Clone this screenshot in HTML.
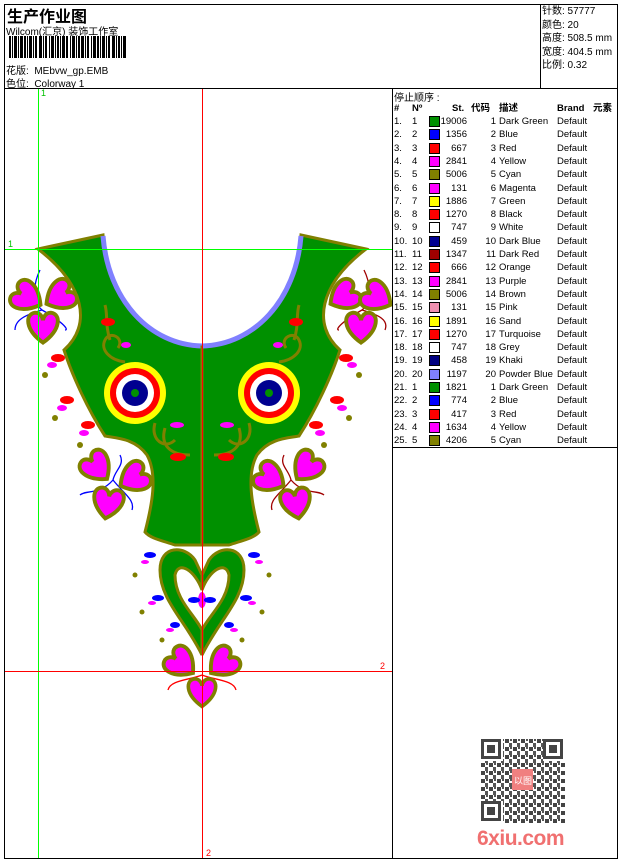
<!DOCTYPE html>
<html><head><meta charset="utf-8"><style>
*{margin:0;padding:0}
body{width:620px;height:860px;background:#fff;position:relative;overflow:hidden;font-family:"Liberation Sans","Noto Sans CJK SC",sans-serif;font-size:10px;color:#000}
.a{position:absolute;white-space:nowrap}
.r{position:absolute;left:393px;height:13px;width:224px;font-size:9.5px;line-height:13px}
.r span{position:absolute}
.sw{width:9px;height:9px;border:1px solid #000;top:1px;left:36px}
</style></head><body>
<div class="a" style="left:4px;top:4px;width:612px;height:853px;border:1px solid #000"></div>
<div class="a" style="left:4px;top:88px;width:613px;height:1px;background:#000"></div>
<div class="a" style="left:540px;top:4px;width:1px;height:84px;background:#000"></div>
<div class="a" style="left:392px;top:88px;width:1px;height:770px;background:#000"></div>
<div class="a" style="left:392px;top:447px;width:225px;height:1px;background:#000"></div>

<div class="a" style="left:7px;top:3px;font-size:16px;font-weight:bold">生产作业图</div>
<div class="a" style="left:6px;top:23px;font-size:10px">Wilcom(汇京) 装饰工作室</div>
<svg class="a" style="left:9px;top:36px" width="118" height="22"><g fill="#000">
<rect x="0" width="2" height="22"/><rect x="3" width="1" height="22"/><rect x="5" width="3" height="22"/><rect x="9" width="1" height="22"/><rect x="11" width="3" height="22"/><rect x="15" width="2" height="22"/><rect x="18" width="1" height="22"/><rect x="20" width="3" height="22"/><rect x="24" width="1" height="22"/><rect x="26" width="2" height="22"/><rect x="30" width="3" height="22"/><rect x="34" width="1" height="22"/><rect x="36" width="2" height="22"/><rect x="40" width="1" height="22"/><rect x="42" width="3" height="22"/><rect x="46" width="1" height="22"/><rect x="48" width="2" height="22"/><rect x="51" width="1" height="22"/><rect x="53" width="3" height="22"/><rect x="57" width="2" height="22"/><rect x="61" width="1" height="22"/><rect x="63" width="3" height="22"/><rect x="67" width="1" height="22"/><rect x="69" width="2" height="22"/><rect x="72" width="3" height="22"/><rect x="76" width="1" height="22"/><rect x="78" width="2" height="22"/><rect x="82" width="1" height="22"/><rect x="84" width="3" height="22"/><rect x="88" width="2" height="22"/><rect x="91" width="1" height="22"/><rect x="93" width="3" height="22"/><rect x="97" width="1" height="22"/><rect x="99" width="2" height="22"/><rect x="103" width="3" height="22"/><rect x="107" width="1" height="22"/><rect x="109" width="2" height="22"/><rect x="112" width="1" height="22"/><rect x="114" width="3" height="22"/></g></svg>
<div class="a" style="left:6px;top:62px">花版:&nbsp; MEbvw_gp.EMB</div>
<div class="a" style="left:6px;top:75px">色位:&nbsp; Colorway 1</div>

<div class="a" style="left:542px;top:5px;line-height:13.5px">针数: 57777<br>颜色: 20<br>高度: 508.5 mm<br>宽度: 404.5 mm<br>比例: 0.32</div>

<div class="a" style="left:394px;top:89px">停止顺序 :</div>
<div class="r" style="top:102px;font-weight:bold;text-decoration:underline"><span style="left:1px">#</span><span style="left:19px">Nº</span><span style="left:59px">St.</span><span style="left:78px">代码</span><span style="left:106px">描述</span><span style="left:164px">Brand</span><span style="left:200px">元素</span></div>
<div id="t"></div>

<svg class="a" style="left:0;top:0" width="392" height="860">
<defs>
<g id="hrt"><path d="M0,12 C-14,2 -14,-10 -6,-11 C-2,-11 0,-7 0,-5 C0,-7 2,-11 6,-11 C14,-10 14,2 0,12Z" fill="#ff00ff" stroke="#808000" stroke-width="3"/></g>
<g id="half">
<path d="M38,249 L103,235 C108,300 150,345 202,347 L202,545 L175,545 C160,540 150,538 145,532 C152,505 158,475 147,455 C135,438 115,438 105,436 C88,410 72,375 64,350 C92,325 85,285 38,249Z" fill="#009000" stroke="#808000" stroke-width="3"/>
<path d="M103,236 C108,300 150,345 202,346" fill="none" stroke="#8080ff" stroke-width="5"/>
<path d="M202,655 C185,620 160,600 160,570 C160,545 185,545 195,560 L202,575 L202,590 C195,570 178,560 175,575 C175,600 195,615 202,630Z" fill="#009000" stroke="#808000" stroke-width="3"/>
<g transform="translate(135,393)">
<circle r="31" fill="#ffff00"/><circle r="25" fill="#ff0000"/><circle r="19" fill="#fff"/><circle r="13" fill="#000090"/><circle r="4" fill="#009000"/></g>
<path d="M125,362 C110,360 100,350 105,340 C110,330 125,338 118,348 M110,340 C105,325 108,315 105,305" fill="none" stroke="#808000" stroke-width="3"/>
<path d="M155,423 C150,440 165,450 175,440 M165,428 C160,445 170,455 190,455" fill="none" stroke="#808000" stroke-width="3"/>
<ellipse cx="108" cy="322" rx="7" ry="4" fill="#ff0000"/><ellipse cx="126" cy="345" rx="5" ry="3" fill="#ff00ff"/>
<ellipse cx="177" cy="425" rx="7" ry="3" fill="#ff00ff"/><ellipse cx="178" cy="457" rx="8" ry="4" fill="#ff0000"/>
<ellipse cx="58" cy="358" rx="7" ry="4" fill="#ff0000"/><ellipse cx="67" cy="400" rx="7" ry="4" fill="#ff0000"/><ellipse cx="88" cy="425" rx="7" ry="4" fill="#ff0000"/>
<ellipse cx="52" cy="365" rx="5" ry="3" fill="#ff00ff"/><ellipse cx="62" cy="408" rx="5" ry="3" fill="#ff00ff"/><ellipse cx="84" cy="433" rx="5" ry="3" fill="#ff00ff"/>
<circle cx="45" cy="375" r="3" fill="#808000"/><circle cx="55" cy="418" r="3" fill="#808000"/><circle cx="80" cy="445" r="3" fill="#808000"/>
<ellipse cx="150" cy="555" rx="6" ry="3" fill="#0000ff"/><ellipse cx="158" cy="598" rx="6" ry="3" fill="#0000ff"/><ellipse cx="175" cy="625" rx="5" ry="3" fill="#0000ff"/>
<ellipse cx="145" cy="562" rx="4" ry="2" fill="#ff00ff"/><ellipse cx="152" cy="603" rx="4" ry="2" fill="#ff00ff"/><ellipse cx="170" cy="630" rx="4" ry="2" fill="#ff00ff"/>
<circle cx="135" cy="575" r="2.5" fill="#808000"/><circle cx="142" cy="612" r="2.5" fill="#808000"/><circle cx="162" cy="640" r="2.5" fill="#808000"/>
</g>
</defs>
<use href="#half"/>
<use href="#half" transform="translate(404,0) scale(-1,1)"/>
<ellipse cx="202" cy="600" rx="4" ry="8" fill="#ff00ff"/><ellipse cx="194" cy="600" rx="6" ry="3" fill="#0000ff"/><ellipse cx="210" cy="600" rx="6" ry="3" fill="#0000ff"/>
<g fill="none" stroke-width="1.3">
<path d="M42,310 C30,300 35,280 40,270 M42,310 C25,315 15,320 15,330 M42,310 C60,320 70,330 65,330" stroke="#0000ff"/>
<path d="M362,310 C374,300 369,280 364,270 M362,310 C379,315 389,320 385,330 M362,310 C344,320 334,330 339,330" stroke="#a00000"/>
<path d="M113,480 C100,495 85,490 80,495 M113,480 C125,495 135,500 132,510 M113,480 C115,470 125,465 120,455" stroke="#0000ff"/>
<path d="M291,480 C304,495 319,490 324,495 M291,480 C279,495 269,500 272,510 M291,480 C289,470 279,465 284,455" stroke="#a00000"/>
<path d="M202,675 C190,680 170,680 168,690 M202,675 C214,680 234,680 236,690" stroke="#ff0000"/>
</g>
<use href="#hrt" transform="translate(27,297) rotate(-60) scale(1.3)"/><use href="#hrt" transform="translate(60,296) rotate(60) scale(1.3)"/><use href="#hrt" transform="translate(43,327) scale(1.3)"/>
<use href="#hrt" transform="translate(344,296) rotate(60) scale(1.3)"/><use href="#hrt" transform="translate(377,297) rotate(-60) scale(1.3)"/><use href="#hrt" transform="translate(361,327) scale(1.3)"/>
<use href="#hrt" transform="translate(97,467) rotate(-40) scale(1.3)"/><use href="#hrt" transform="translate(134,478) rotate(60) scale(1.3)"/><use href="#hrt" transform="translate(108,503) rotate(10) scale(1.3)"/>
<use href="#hrt" transform="translate(307,467) rotate(40) scale(1.3)"/><use href="#hrt" transform="translate(270,478) rotate(-60) scale(1.3)"/><use href="#hrt" transform="translate(296,503) rotate(-10) scale(1.3)"/>
<use href="#hrt" transform="translate(181,663) rotate(-50) scale(1.3)"/><use href="#hrt" transform="translate(223,663) rotate(50) scale(1.3)"/><use href="#hrt" transform="translate(202,692) scale(1.2)"/>
<line x1="38.5" y1="89" x2="38.5" y2="858" stroke="#00ff00"/>
<line x1="5" y1="249.5" x2="392" y2="249.5" stroke="#00ff00"/>
<line x1="202.5" y1="89" x2="202.5" y2="858" stroke="#ff0000"/>
<line x1="5" y1="671.5" x2="392" y2="671.5" stroke="#ff0000"/>
<text x="41" y="96" font-size="9" fill="#00c000" font-family="Liberation Sans">1</text>
<text x="8" y="247" font-size="9" fill="#00c000" font-family="Liberation Sans">1</text>
<text x="380" y="669" font-size="9" fill="#ff0000" font-family="Liberation Sans">2</text>
<text x="206" y="856" font-size="9" fill="#ff0000" font-family="Liberation Sans">2</text>
</svg>

<svg class="a" style="left:481px;top:739px" width="84" height="84">
<defs><pattern id="qp" width="8" height="8" patternUnits="userSpaceOnUse"><rect width="4" height="4" fill="#444"/><rect x="4" y="4" width="3" height="4" fill="#555"/><rect x="5" y="0" width="2" height="2" fill="#555"/></pattern></defs>
<rect width="84" height="84" fill="url(#qp)"/>
<g fill="#fff"><rect width="22" height="22"/><rect x="62" width="22" height="22"/><rect y="62" width="22" height="22"/></g>
<g fill="none" stroke="#444" stroke-width="3"><rect x="1.5" y="1.5" width="17" height="17"/><rect x="63.5" y="1.5" width="17" height="17"/><rect x="1.5" y="63.5" width="17" height="17"/></g>
<g fill="#444"><rect x="6" y="6" width="8" height="8"/><rect x="68" y="6" width="8" height="8"/><rect x="6" y="68" width="8" height="8"/></g>
<rect x="31" y="30" width="21" height="21" fill="#f08080"/><text x="33" y="45" font-size="9" fill="#fff" font-family="Noto Sans CJK SC">以图</text>
</svg>
<div class="a" style="left:477px;top:827px;font-size:21px;font-weight:bold;color:#f07070;letter-spacing:-0.5px">6xiu.com</div>

<script>
var d=[[1,"#009000",19006,1,"Dark Green"],[2,"#0000ff",1356,2,"Blue"],[3,"#ff0000",667,3,"Red"],[4,"#ff00ff",2841,4,"Yellow"],[5,"#808000",5006,5,"Cyan"],[6,"#ff00ff",131,6,"Magenta"],[7,"#ffff00",1886,7,"Green"],[8,"#ff0000",1270,8,"Black"],[9,"#ffffff",747,9,"White"],[10,"#000090",459,10,"Dark Blue"],[11,"#a00000",1347,11,"Dark Red"],[12,"#ff0000",666,12,"Orange"],[13,"#ff00ff",2841,13,"Purple"],[14,"#808000",5006,14,"Brown"],[15,"#f090b0",131,15,"Pink"],[16,"#ffff00",1891,16,"Sand"],[17,"#ff0000",1270,17,"Turquoise"],[18,"#ffffff",747,18,"Grey"],[19,"#000080",458,19,"Khaki"],[20,"#8080ff",1197,20,"Powder Blue"],[1,"#009000",1821,1,"Dark Green"],[2,"#0000ff",774,2,"Blue"],[3,"#ff0000",417,3,"Red"],[4,"#ff00ff",1634,4,"Yellow"],[5,"#808000",4206,5,"Cyan"]];
var h="";d.forEach(function(r,i){var y=115+i*13.3;h+='<div class="r" style="top:'+y+'px"><span style="left:1px">'+(i+1)+'.</span><span style="left:19px">'+r[0]+'</span><span class="sw" style="background:'+r[1]+'"></span><span style="right:150px">'+r[2]+'</span><span style="right:121px">'+r[3]+'</span><span style="left:106px">'+r[4]+'</span><span style="left:164px">Default</span></div>';});
document.getElementById("t").innerHTML=h;
</script>
</body></html>
